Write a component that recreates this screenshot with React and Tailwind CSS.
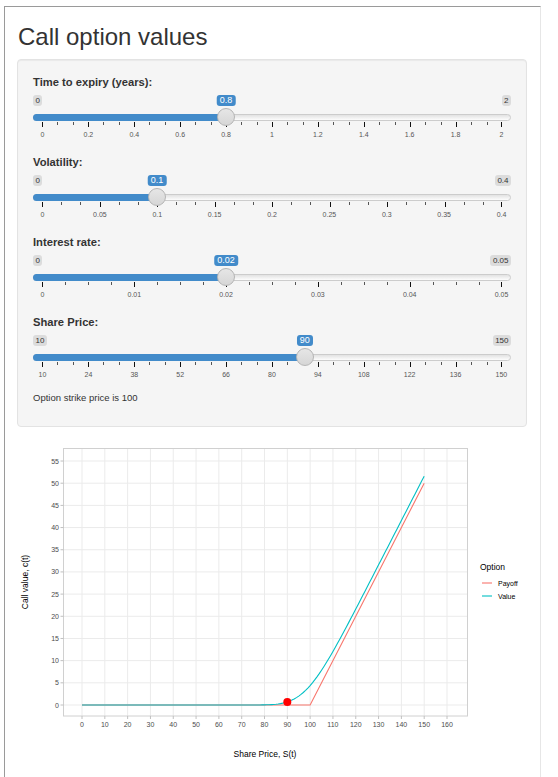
import React from "react";

const range = (a, b, n) => Array.from({ length: n + 1 }, (_, i) => a + ((b - a) * i) / n);

const sliders = [
  {
    label: "Time to expiry (years):",
    min: "0",
    max: "2",
    value: "0.8",
    frac: 0.4,
    ticks: ["0", "0.2", "0.4", "0.6", "0.8", "1", "1.2", "1.4", "1.6", "1.8", "2"],
    sub: 3,
  },
  {
    label: "Volatility:",
    min: "0",
    max: "0.4",
    value: "0.1",
    frac: 0.25,
    ticks: ["0", "0.05", "0.1", "0.15", "0.2", "0.25", "0.3", "0.35", "0.4"],
    sub: 3,
  },
  {
    label: "Interest rate:",
    min: "0",
    max: "0.05",
    value: "0.02",
    frac: 0.4,
    ticks: ["0", "0.01", "0.02", "0.03", "0.04", "0.05"],
    sub: 4,
  },
  {
    label: "Share Price:",
    min: "10",
    max: "150",
    value: "90",
    frac: 80 / 140,
    ticks: ["10", "24", "38", "52", "66", "80", "94", "108", "122", "136", "150"],
    sub: 3,
  },
];

const GW = 460;

function Slider({ s }) {
  const tx = 9 + s.frac * GW;
  const n = s.ticks.length - 1;
  return (
    <div className="flex flex-col pb-[7px] pt-[5px]">
      <div className="relative flex h-[11px] justify-between">
        <span className="rounded-[3px] bg-[#dcdcdc] px-[2.5px] text-[8px] leading-[11px] text-[#333]">{s.min}</span>
        <span className="rounded-[3px] bg-[#dcdcdc] px-[2.5px] text-[8px] leading-[11px] text-[#333]">{s.max}</span>
        <span
          className="absolute top-0 -translate-x-1/2 rounded-[3px] bg-[#428bca] px-[3px] text-[9px] leading-[11px] text-white"
          style={{ left: tx }}
        >
          {s.value}
        </span>
      </div>
      <div className="relative mt-[8px] h-[7px] rounded-full border border-[#cccccc] bg-gradient-to-b from-[#e2e2e2] to-[#fdfdfd]">
        <div className="absolute -left-px -top-px h-[7px] rounded-l-full bg-[#428bca]" style={{ width: tx }} />
        <div
          className="absolute -top-[7px] h-[18px] w-[18px] rounded-full border border-[#b5b5b5] bg-gradient-to-b from-[#e6e6e6] to-[#d6d6d6]"
          style={{ left: tx - 10 }}
        />
      </div>
      <div className="mx-[9px] mt-px flex h-[5px]">
        {s.ticks.slice(0, n).map((t) => (
          <div key={t} className="flex flex-1">
            {Array.from({ length: s.sub }, (_, j) => (
              <div key={j} className="flex-1">
                <div className={j === 0 ? "h-[5px] w-px bg-[#111]" : "h-[3px] w-px bg-[#555]"} />
              </div>
            ))}
          </div>
        ))}
        <div className="-ml-px h-[5px] w-px bg-[#111]" />
      </div>
      <div className="mx-[9px] mt-[3px] flex justify-between">
        {s.ticks.map((t) => (
          <div key={t} className="flex w-px justify-center">
            <span className="whitespace-nowrap text-[7px] leading-[9px] text-[#555]">{t}</span>
          </div>
        ))}
      </div>
    </div>
  );
}

function normCdf(x) {
  const t = 1 / (1 + 0.2316419 * Math.abs(x));
  const d = 0.3989423 * Math.exp((-x * x) / 2);
  const p =
    d * t * (0.3193815 + t * (-0.3565638 + t * (1.781478 + t * (-1.821256 + t * 1.330274))));
  return x > 0 ? 1 - p : p;
}

function bsCall(S, K = 100, T = 0.8, sig = 0.1, r = 0.02) {
  if (S <= 0) return 0;
  const d1 = (Math.log(S / K) + (r + (sig * sig) / 2) * T) / (sig * Math.sqrt(T));
  const d2 = d1 - sig * Math.sqrt(T);
  return S * normCdf(d1) - K * Math.exp(-r * T) * normCdf(d2);
}

const X = (s) => 82 + s * 2.28125;
const Y = (v) => 705 - v * 4.436;

function Chart() {
  const valuePts = [];
  for (let s = 0; s <= 150; s += 1) valuePts.push(`${X(s).toFixed(2)},${Y(bsCall(s)).toFixed(2)}`);
  const payoffPts = [
    [0, 0],
    [100, 0],
    [150, 50],
  ]
    .map(([s, v]) => `${X(s)},${Y(v)}`)
    .join(" ");
  const xs = range(0, 160, 16);
  const ys = range(0, 55, 11);
  const font = "'Liberation Sans', Arial, sans-serif";
  return (
    <svg className="block" width="510" height="350" viewBox="17 427 510 350" style={{ fontFamily: font }}>
      <rect x="63.5" y="448.5" width="404" height="267.5" fill="#fff" />
      {xs.map((s) => (
        <line key={"gx" + s} x1={X(s)} x2={X(s)} y1="448.5" y2="716" stroke="#ebebeb" strokeWidth="1" />
      ))}
      {ys.map((v) => (
        <line key={"gy" + v} x1="63.5" x2="467.5" y1={Y(v)} y2={Y(v)} stroke="#ebebeb" strokeWidth="1" />
      ))}
      <rect x="63.5" y="448.5" width="404" height="267.5" fill="none" stroke="#d0d0d0" strokeWidth="1" />
      {xs.map((s) => (
        <g key={"tx" + s}>
          <line x1={X(s)} x2={X(s)} y1="716" y2="719" stroke="#c0c0c0" />
          <text x={X(s)} y="726.6" fontSize="7" fill="#4d4d4d" textAnchor="middle">
            {s}
          </text>
        </g>
      ))}
      {ys.map((v) => (
        <g key={"ty" + v}>
          <line x1="60.5" x2="63.5" y1={Y(v)} y2={Y(v)} stroke="#c0c0c0" />
          <text x="59" y={Y(v) + 2.5} fontSize="7" fill="#4d4d4d" textAnchor="end">
            {v}
          </text>
        </g>
      ))}
      <polyline points={payoffPts} fill="none" stroke="#F8766D" strokeWidth="1.1" />
      <polyline points={valuePts.join(" ")} fill="none" stroke="#00BFC4" strokeWidth="1.1" />
      <circle cx={X(90)} cy={Y(bsCall(90))} r="4" fill="#ff0000" />
      <text x="265" y="757" fontSize="8.5" fill="#000" textAnchor="middle">
        Share Price, S(t)
      </text>
      <text x="0" y="0" fontSize="8.5" fill="#000" textAnchor="middle" transform="translate(28 582) rotate(-90)">
        Call value, c(t)
      </text>
      <text x="480" y="570" fontSize="8.5" fill="#000">
        Option
      </text>
      <line x1="482" x2="492" y1="583" y2="583" stroke="#F8766D" strokeWidth="1.1" />
      <text x="498" y="585.5" fontSize="7" fill="#000">
        Payoff
      </text>
      <line x1="482" x2="492" y1="596" y2="596" stroke="#00BFC4" strokeWidth="1.1" />
      <text x="498" y="598.5" fontSize="7" fill="#000">
        Value
      </text>
    </svg>
  );
}

export default function App() {
  return (
    <div className="flex bg-white pl-[4px] pt-[6px] font-['Liberation_Sans',Arial,sans-serif] text-[#333]">
      <div className="flex w-[537px] flex-col border-l border-r border-t border-l-[#9a9a9a] border-r-[#e6e6e6] border-t-[#9a9a9a] pl-[12px] pr-[13px]">
        <h1 className="ml-px mt-[15px] text-[24px] font-normal leading-[30px] text-[#333]">Call option values</h1>
        <div className="mt-[7px] flex flex-col gap-[8px] rounded-[4px] border border-[#e3e3e3] bg-[#f5f5f5] px-[15px] pb-[21px] pt-[14px] shadow-[inset_0_1px_1px_rgba(0,0,0,0.05)]">
          {sliders.map((s) => (
            <div key={s.label} className="flex flex-col">
              <div className="h-[16px] text-[11.2px] font-bold leading-[16px] text-[#333]">{s.label}</div>
              <Slider s={s} />
            </div>
          ))}
          <div className="-mt-[3px] text-[9.5px] leading-[14px] text-[#333]">Option strike price is 100</div>
        </div>
        <Chart />
      </div>
    </div>
  );
}
